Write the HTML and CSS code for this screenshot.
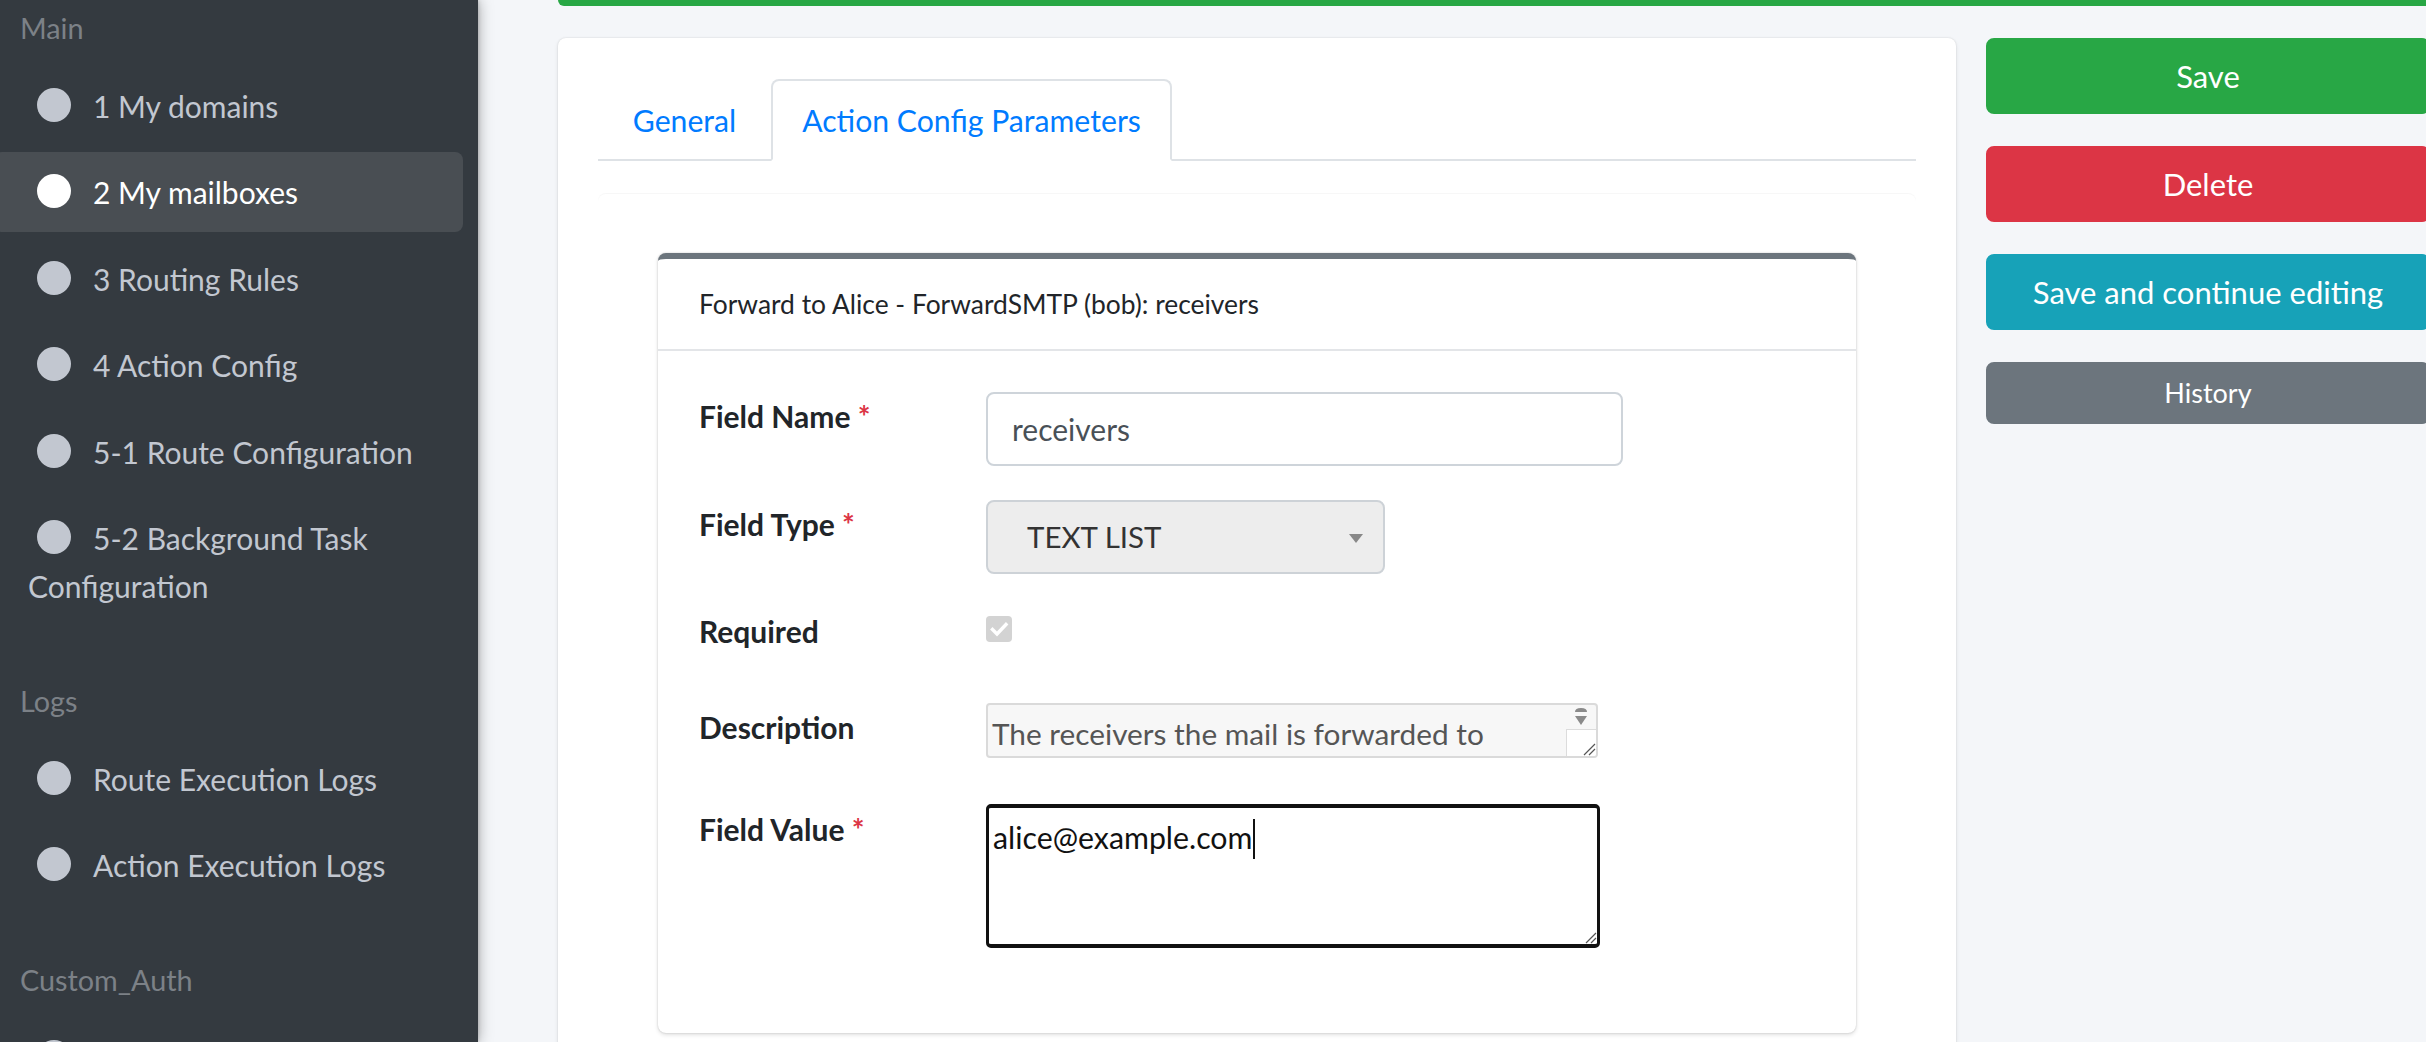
FILE: index.html
```html
<!DOCTYPE html>
<html lang="en">
<head>
<meta charset="utf-8">
<title>Action Config Parameter</title>
<link rel="stylesheet" href="styles.css">
</head>
<body>
<aside class="sidebar">
  <ul class="nav">
    <li class="nav-header">Main</li>
    <li><a class="nav-link"><span class="dot"></span>1 My domains</a></li>
    <li><a class="nav-link active"><span class="dot"></span>2 My mailboxes</a></li>
    <li><a class="nav-link"><span class="dot"></span>3 Routing Rules</a></li>
    <li><a class="nav-link"><span class="dot"></span>4 Action Config</a></li>
    <li><a class="nav-link"><span class="dot"></span>5-1 Route Configuration</a></li>
    <li><a class="nav-link"><span class="dot"></span>5-2 Background Task Configuration</a></li>
    <li class="nav-header group">Logs</li>
    <li><a class="nav-link"><span class="dot"></span>Route Execution Logs</a></li>
    <li><a class="nav-link"><span class="dot"></span>Action Execution Logs</a></li>
    <li class="nav-header group">Custom_Auth</li>
    <li><a class="nav-link"><span class="dot"></span></a></li>
  </ul>
</aside>
<main class="main">
  <div class="alert-tail"></div>
  <div class="content">
    <section class="card">
      <ul class="tabs">
        <li class="tab tab-general">General</li>
        <li class="tab tab-active">Action Config Parameters</li>
      </ul>
      <div class="tab-content">
        <div class="inline-card">
          <div class="inline-header">Forward to Alice - ForwardSMTP (bob): receivers</div>
          <div class="inline-body">
            <div class="row row-name">
              <label class="label">Field Name <span class="req">*</span></label>
              <div class="input input-name">receivers</div>
            </div>
            <div class="row row-type">
              <label class="label">Field Type <span class="req">*</span></label>
              <div class="select">TEXT LIST<span class="caret-down"></span></div>
            </div>
            <div class="row row-required">
              <label class="label">Required</label>
              <span class="checkbox"><svg viewBox="0 0 26 26" width="26" height="26"><path d="M6.5 13.5 L11 18 L20 8.5" fill="none" stroke="#fff" stroke-width="3.4" stroke-linecap="square"/></svg></span>
            </div>
            <div class="row row-desc">
              <label class="label">Description</label>
              <div class="textarea-ro">
                <span class="ro-text">The receivers the mail is forwarded to</span>
                <span class="spin">
                  <span class="spin-arrows"><svg viewBox="0 0 16 22" width="16" height="22"><path d="M2 7 Q2 3 8 3 Q14 3 14 7 Z" fill="#8a8a8a"/><path d="M2 11 H14 L8 20 Z" fill="#8a8a8a"/></svg></span>
                  <span class="spin-grip"><svg viewBox="0 0 14 14" width="14" height="14"><path d="M2 13 L13 2 M7 13 L13 7" stroke="#555" stroke-width="1.2"/></svg></span>
                </span>
              </div>
            </div>
            <div class="row row-value">
              <label class="label">Field Value <span class="req">*</span></label>
              <div class="textarea-edit">
                <span class="value-text">alice@example.com</span><span class="text-caret"></span>
                <span class="grip"><svg viewBox="0 0 14 14" width="14" height="14"><path d="M3 13 L13 3 M8 13 L13 8" stroke="#555" stroke-width="1.2"/></svg></span>
              </div>
            </div>
          </div>
        </div>
      </div>
    </section>
    <div class="actions">
      <button class="btn btn-success">Save</button>
      <button class="btn btn-danger">Delete</button>
      <button class="btn btn-info">Save and continue editing</button>
      <button class="btn btn-secondary btn-sm">History</button>
    </div>
  </div>
</main>
</body>
</html>
```
FILE: styles.css
```css
* { box-sizing: border-box; }
html, body { margin: 0; padding: 0; }
body {
  width: 2426px;
  height: 1042px;
  overflow: hidden;
  display: flex;
  font-family: "Lato", "Liberation Sans", sans-serif;
  color: #212529;
  background: #f4f6f9;
}

/* Sidebar */
.sidebar {
  width: 478px;
  flex-shrink: 0;
  height: 1042px;
  background: #343a40;
  box-shadow: 0 0 14px rgba(0,0,0,.35), 0 0 4px rgba(0,0,0,.2);
  overflow: hidden;
  position: relative;
  z-index: 2;
}
.nav {
  list-style: none;
  margin: -9px 0 0 0;
  padding: 0;
}
.nav-header {
  padding: 16px 20px;
  font-size: 28.8px;
  line-height: 43px;
  color: #7c8187;
}
.nav-header.group { margin-top: 38px; }
.nav-link {
  display: block;
  width: 469px;
  min-height: 80px;
  margin-left: -6px;
  margin-bottom: 6.4px;
  padding: 16px 16px 16px 34px;
  font-size: 30px;
  line-height: 48px;
  color: #c2c7d0;
  border-radius: 8px;
}
.nav-link.active {
  background: #494e53;
  color: #fff;
}
.dot {
  display: inline-block;
  width: 34px;
  height: 34px;
  border-radius: 50%;
  background: #c2c7d0;
  margin: 0 22px 0 9px;
  vertical-align: -4px;
}
.nav-link.active .dot { background: #fff; }

/* Main */
.main {
  flex: 1;
  min-width: 0;
  padding-left: 80px;
  overflow: hidden;
}
.alert-tail {
  height: 6px;
  background: #28a745;
  border-radius: 0 0 0 8px;
}
.content {
  display: flex;
  gap: 30px;
  margin-top: 32px;
  width: 1872px;
}
.card {
  width: 1398px;
  flex-shrink: 0;
  height: 1100px;
  background: #fff;
  border-radius: 8px;
  box-shadow: 0 0 2px rgba(0,0,0,.14), 0 2px 5px rgba(0,0,0,.08);
  padding: 41px 40px 40px;
}

/* Tabs */
.tabs {
  list-style: none;
  margin: 0;
  padding: 0;
  display: flex;
  border-bottom: 2px solid #dee2e6;
}
.tab {
  height: 82px;
  margin-bottom: -2px;
  border: 2px solid transparent;
  border-radius: 8px 8px 0 0;
  text-align: center;
  font-size: 30.2px;
  line-height: 78px;
  color: #007bff;
}
.tab-general { width: 173px; }
.tab-active {
  width: 401px;
  background: #fff;
  border-color: #dee2e6 #dee2e6 #fff;
}

.tab-content {
  margin-top: 33px;
  padding: 59px 60px 0;
  border-radius: 8px 8px 0 0;
  box-shadow: 0 -1px 1px rgba(0,0,0,.035);
}

/* Inline card */
.inline-card {
  background: #fff;
  border-top: 6px solid #6c757d;
  border-radius: 8px;
  box-shadow: 0 0 2px rgba(0,0,0,.18), 0 2px 4px rgba(0,0,0,.12);
}
.inline-header {
  padding: 24px 41px;
  font-size: 26.4px;
  line-height: 42px;
  color: #212529;
  border-bottom: 2px solid #e3e5e8;
}
.inline-body {
  padding: 41px 41px 85px;
}
.row {
  display: flex;
  align-items: flex-start;
}
.label {
  width: 287px;
  flex-shrink: 0;
  font-weight: 700;
  font-size: 30px;
  line-height: 48px;
  color: #212529;
}
.req { color: #dc3545; }
.row-name { margin-bottom: 34px; }
.row-type { margin-bottom: 33px; }
.row-required { margin-bottom: 48px; }
.row-desc { margin-bottom: 46px; }
.row-value .label { margin-top: 1px; }

.input {
  width: 637px;
  height: 74px;
  border: 2px solid #ced4da;
  border-radius: 8px;
  padding-left: 24px;
  font-size: 30px;
  line-height: 70px;
  color: #495057;
}
.select {
  position: relative;
  width: 399px;
  height: 74px;
  background: #ededed;
  border: 2px solid #cdd2d7;
  border-radius: 8px;
  padding-left: 39px;
  font-size: 29.5px;
  line-height: 70px;
  color: #333;
}
.caret-down {
  position: absolute;
  right: 20px;
  top: 32px;
  width: 0;
  height: 0;
  border-left: 7px solid transparent;
  border-right: 7px solid transparent;
  border-top: 9px solid #888;
}
.checkbox {
  display: block;
  width: 26px;
  height: 26px;
  margin-top: 9px;
  border-radius: 4px;
  background: #d3d3d3;
}
.checkbox svg { display: block; }

.textarea-ro {
  position: relative;
  width: 612px;
  height: 55px;
  background: #f7f7f7;
  border: 2px solid #dadada;
  border-radius: 4px;
  padding-left: 4px;
  font-size: 29.8px;
  line-height: 58px;
  color: #555;
  overflow: hidden;
}
.spin {
  position: absolute;
  right: 0;
  top: 0;
  width: 30px;
  height: 51px;
  display: flex;
  flex-direction: column;
}
.spin-arrows {
  height: 24px;
  display: flex;
  justify-content: center;
  align-items: flex-start;
}
.spin-arrows svg { display: block; }
.spin-grip {
  flex: 1;
  border-left: 1px solid #dcdcdc;
  border-top: 1px solid #dcdcdc;
  background: #fff;
  display: flex;
  justify-content: flex-end;
  align-items: flex-end;
}
.spin-grip svg { display: block; }

.textarea-edit {
  position: relative;
  width: 614px;
  height: 144px;
  border: 3px solid #111;
  border-top-width: 4px;
  border-bottom-width: 4px;
  border-radius: 5px;
  padding: 8px 4px 0;
  font-size: 30.3px;
  line-height: 42px;
  color: #111;
}
.text-caret {
  display: inline-block;
  width: 2px;
  height: 40px;
  background: #111;
  vertical-align: -10px;
  margin-left: 1px;
}
.grip {
  position: absolute;
  right: 0;
  bottom: 0;
}
.grip svg { display: block; }

/* Buttons */
.actions {
  width: 444px;
  flex-shrink: 0;
  display: flex;
  flex-direction: column;
  gap: 32px;
}
.btn {
  display: block;
  width: 100%;
  height: 76px;
  border: 2px solid transparent;
  border-radius: 8px;
  font-family: "Lato", "Liberation Sans", sans-serif;
  font-size: 31px;
  line-height: 48px;
  color: #fff;
  text-align: center;
  padding: 0;
}
.btn-success { background: #28a745; border-color: #28a745; }
.btn-danger { background: #dc3545; border-color: #dc3545; }
.btn-info { background: #17a2b8; border-color: #17a2b8; }
.btn-secondary { background: #6c757d; border-color: #6c757d; }
.btn-sm { height: 62px; font-size: 27px; }
```
